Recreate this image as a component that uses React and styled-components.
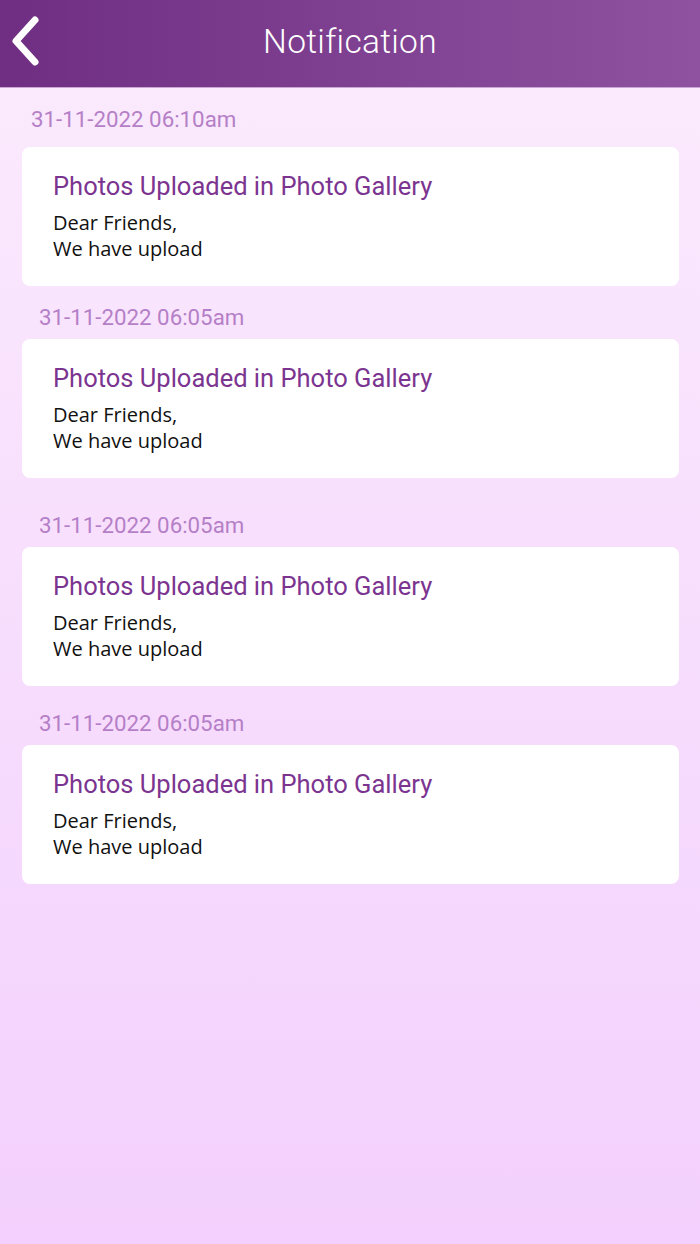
import styled, { createGlobalStyle } from "styled-components"

const GlobalStyle = createGlobalStyle`
  html, body {
    margin: 0;
    padding: 0;
  }
  body {
    font-family: Roboto, "Liberation Sans", sans-serif;
  }
`

// spacing between entries in the source isn't uniform, keep it per item
const notifications = [
  { date: "31-11-2022 06:10am", indent: 31, top: 17, gap: 14 },
  { date: "31-11-2022 06:05am", indent: 39, top: 17, gap: 8 },
  { date: "31-11-2022 06:05am", indent: 39, top: 33, gap: 8 },
  { date: "31-11-2022 06:05am", indent: 39, top: 23, gap: 8 },
]

const App = () => {
  return (
    <Page>
      <GlobalStyle />
      <Header>
        <BackButton aria-label="Back">
          <svg width="34" height="52" viewBox="0 0 34 52">
            <polyline
              points="26,5 7,26 26,47"
              fill="none"
              stroke="#fff"
              strokeWidth="7"
              strokeLinecap="round"
              strokeLinejoin="round"
            />
          </svg>
        </BackButton>
        <Title>Notification</Title>
      </Header>

      <List>
        {notifications.map((item, index) => (
          <Item key={index} top={item.top}>
            <DateLabel indent={item.indent} gap={item.gap}>
              {item.date}
            </DateLabel>
            <Card>
              <CardTitle>Photos Uploaded in Photo Gallery</CardTitle>
              <CardBody>
                Dear Friends,
                <br />
                We have upload
              </CardBody>
            </Card>
          </Item>
        ))}
      </List>
    </Page>
  )
}

const Page = styled.div`
  min-height: 1244px;
  background: linear-gradient(180deg, #fbebfd 0%, #f3d0fd 100%);
`

const Header = styled.header`
  height: 87px;
  position: relative;
  display: flex;
  align-items: center;
  justify-content: center;
  background: linear-gradient(90deg, #6f2e82 0%, #8e52a0 100%);
  border-bottom: 1px solid #c9a6d3;
`

const BackButton = styled.div`
  position: absolute;
  left: 9px;
  top: 15px;
  display: flex;
`

const Title = styled.h1`
  margin: 0 0 3px;
  font-family: Roboto, sans-serif;
  font-weight: 300;
  font-size: 33.5px;
  line-height: 40px;
  color: #fff;
  letter-spacing: 0.3px;
`

const List = styled.main`
  display: flex;
  flex-direction: column;
  padding: 0 21px 0 22px;
`

const Item = styled.section`
  display: flex;
  flex-direction: column;
  padding-top: ${(p) => p.top}px;
`

const DateLabel = styled.div`
  padding-left: ${(p) => p.indent - 22}px;
  font-family: Roboto, sans-serif;
  font-size: 22.3px;
  line-height: 28px;
  color: #b57fc7;
  margin-bottom: ${(p) => p.gap}px;
`

const Card = styled.article`
  height: 139px;
  box-sizing: border-box;
  background: #fff;
  border-radius: 8px;
  padding: 25px 31px 0;
`

const CardTitle = styled.h2`
  margin: 0 0 10px;
  font-family: Roboto, sans-serif;
  font-weight: 400;
  font-size: 25.5px;
  line-height: 28px;
  color: #7b3590;
`

const CardBody = styled.p`
  margin: 0;
  font-family: "Open Sans", "Noto Sans", sans-serif;
  font-size: 20px;
  line-height: 26px;
  color: #111;
`

export default App
